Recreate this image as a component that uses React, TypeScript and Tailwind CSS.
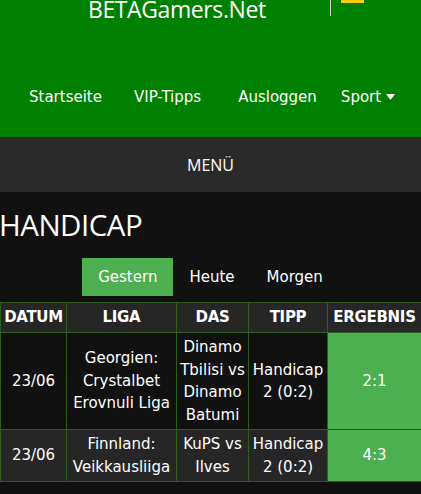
const rows = [
  {
    date: "23/06",
    league: ["Georgien:", "Crystalbet", "Erovnuli Liga"],
    match: ["Dinamo", "Tbilisi vs", "Dinamo", "Batumi"],
    tip: ["Handicap", "2 (0:2)"],
    result: "2:1",
  },
  {
    date: "23/06",
    league: ["Finnland:", "Veikkausliiga"],
    match: ["KuPS vs", "Ilves"],
    tip: ["Handicap", "2 (0:2)"],
    result: "4:3",
  },
];

const navLinks = ["Startseite", "VIP-Tipps", "Ausloggen"];

const App: React.FC = () => {
  return (
    <div className="min-h-[494px] bg-[#111111] overflow-hidden font-['DejaVu_Sans',sans-serif] text-white">
      {/* top bar */}
      <header className="h-[137px] bg-[#008000] flex flex-col">
        <div className="h-[46px] flex items-start">
          <h1 className="ml-[88px] mt-[-6px] text-[23px] leading-[30px] font-['Open_Sans',sans-serif] tracking-[-0.4px]">
            BETAGamers.Net
          </h1>
          <div className="ml-[64px] w-px h-[16px] bg-[#cfcfcf]" />
          <div className="ml-[10px] w-[23px] h-[3px] bg-[#ffcc00]" />
        </div>
        <nav className="mt-[41px] flex items-center text-[15px] leading-[20px]">
          <a className="ml-[29px]">{navLinks[0]}</a>
          <a className="ml-[32px]">{navLinks[1]}</a>
          <a className="ml-[37px]">{navLinks[2]}</a>
          <a className="ml-[24px] flex items-center gap-[5px]">
            Sport
            <svg width="9" height="6" viewBox="0 0 9 6">
              <path d="M0 0h9L4.5 6z" fill="white" />
            </svg>
          </a>
        </nav>
      </header>

      {/* menu toggle */}
      <div className="h-[55px] bg-[#2a2a2a] flex items-center justify-center">
        <span className="text-[16px] font-['Open_Sans',sans-serif]">MENÜ</span>
      </div>

      <h2 className="mt-[13px] -ml-[1px] text-[29.5px] leading-[40px] font-['Open_Sans',sans-serif] tracking-[-0.5px]">
        HANDICAP
      </h2>

      {/* day tabs */}
      <div className="mt-[13px] flex justify-center text-[15px]">
        <button className="h-[38px] px-4 bg-[#4caf50]">Gestern</button>
        <button className="h-[38px] px-4">Heute</button>
        <button className="h-[38px] px-4">Morgen</button>
      </div>

      <table className="mt-[6px] w-[421px] table-fixed border-collapse text-[15px] leading-[22.5px] text-center">
        <colgroup>
          <col className="w-[66px]" />
          <col className="w-[110px]" />
          <col className="w-[72px]" />
          <col className="w-[79px]" />
          <col className="w-[94px]" />
        </colgroup>
        <thead>
          <tr className="bg-[#262626] h-[30px]">
            {["DATUM", "LIGA", "DAS", "TIPP", "ERGEBNIS"].map((h) => (
              <th
                key={h}
                className="border border-[#2e5d1e] font-bold px-0 text-[15px] tracking-[-0.3px] whitespace-nowrap"
              >
                {h}
              </th>
            ))}
          </tr>
        </thead>
        <tbody>
          {rows.map((r, i) => (
            <tr key={i} className={i % 2 === 1 ? "bg-[#262626]" : "bg-[#111111]"}>
              <td className="border border-[#2e5d1e] py-[3px]">{r.date}</td>
              <td className="border border-[#2e5d1e] py-[3px] whitespace-nowrap">
                {r.league.map((l) => (
                  <div key={l}>{l}</div>
                ))}
              </td>
              <td className="border border-[#2e5d1e] py-[3px] whitespace-nowrap">
                {r.match.map((m, j) => (
                  <div key={j}>{m}</div>
                ))}
              </td>
              <td className="border border-[#2e5d1e] py-[3px] whitespace-nowrap">
                {r.tip.map((t) => (
                  <div key={t}>{t}</div>
                ))}
              </td>
              <td className="border border-[#2e5d1e] bg-[#4caf50] py-[3px]">{r.result}</td>
            </tr>
          ))}
        </tbody>
      </table>
    </div>
  );
};

export default App;
